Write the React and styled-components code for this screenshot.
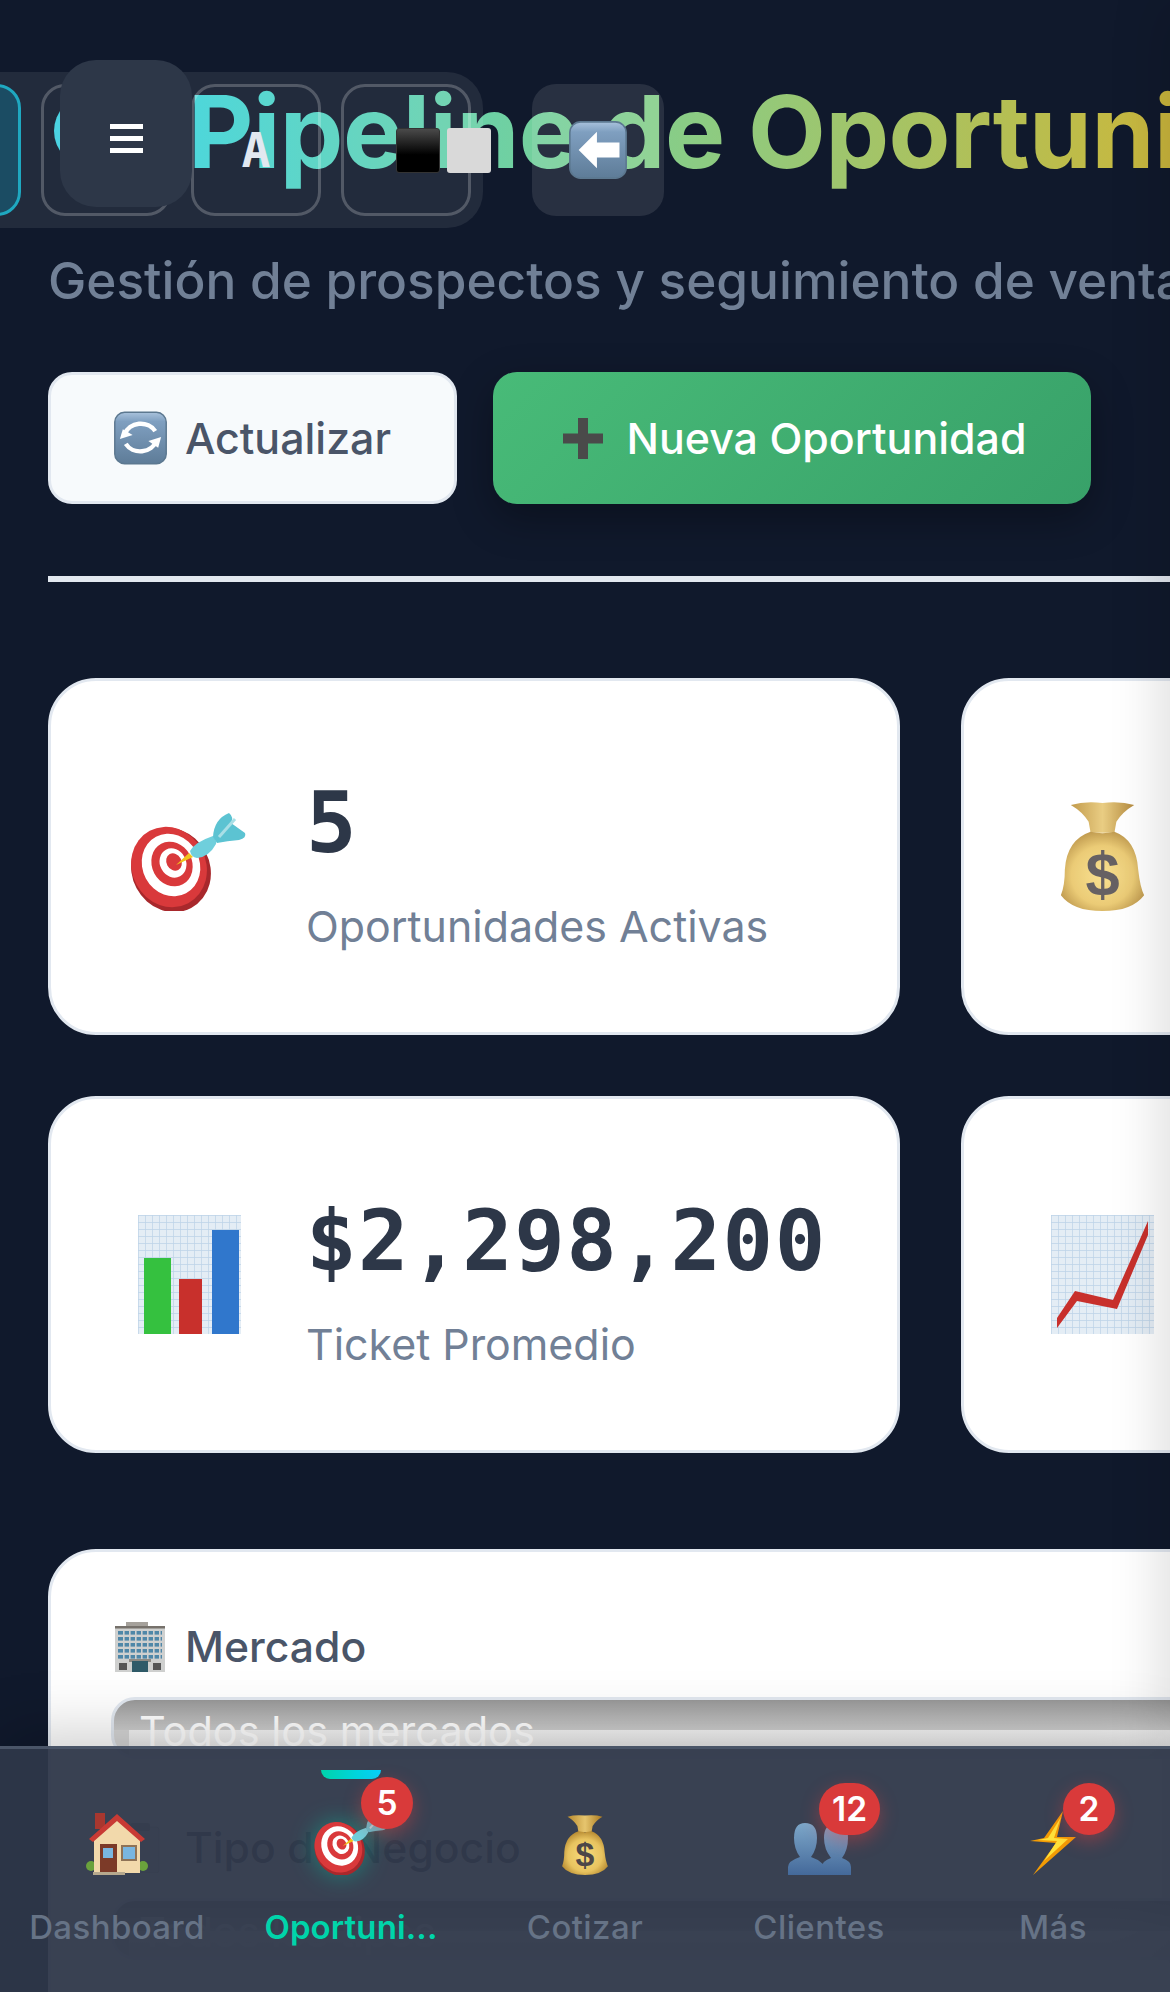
import React from "react";
import styled, { createGlobalStyle } from "styled-components";

const Global = createGlobalStyle`
  html, body { margin: 0; padding: 0; height: 1992px; overflow: hidden; background: #10192c; }
  #root { height: 1992px; overflow: hidden; position: relative; }
  * { box-sizing: border-box; }
`;
const sans = `Inter, "Noto Sans", "Liberation Sans", sans-serif`;
const mono = `"DejaVu Sans Mono", "Liberation Mono", monospace`;

const Page = styled.div`position: relative; width: 1170px; height: 1992px; overflow: hidden; background: #10192c; font-family: ${sans};`;
const Main = styled.main`width: 1860px; padding: 73px 48px 0;`;
const Header = styled.header`border-bottom: 6px solid #e2e8f0; padding-bottom: 72px; margin-bottom: 96px;`;
const Title = styled.h1`display: flex; align-items: center; margin: 0 0 59px; height: 116px; white-space: nowrap; font-size: 101px; font-weight: 700; line-height: 116px;`;
const TitleMark = styled.svg`flex: none; margin-right: 32px; display: block;`;
const TitleText = styled.span`
  background: linear-gradient(90deg, #3fd4d8 0%, #80cf90 33%, #bdbc4a 68%, #f5a512 100%);
  -webkit-background-clip: text; background-clip: text; color: transparent; letter-spacing: -0.5px;
`;
const Subtitle = styled.p`margin: 0 0 60px; font-size: 51.3px; line-height: 64px; font-weight: 550; color: #718096; white-space: nowrap;`;
const Actions = styled.div`display: flex; gap: 36px;`;
const ActionBtn = styled.button`
  display: flex; align-items: center; justify-content: center; gap: 18px; height: 132px; border-radius: 24px;
  font: 550 42.9px/50px ${sans}; padding: 0;
  width: ${p => p.$w}px;
  ${p => p.$primary ? `background: linear-gradient(135deg,#48bb78,#38a169); color:#fff; border: 0; box-shadow: 0 14px 42px rgba(0,0,0,.32); gap: 24px; padding-left: 5px;`
    : `background:#f7fafc; color:#4a5568; border: 3px solid #e2e8f0;`}
`;
const StatsGrid = styled.section`display: grid; grid-template-columns: 852px 852px; gap: 61px 61px; margin-bottom: 96px;`;
const StatCard = styled.article`
  display: flex; align-items: center; gap: 51px; height: 357px; padding: 0 72px; background: #fff;
  border: 3px solid #e2e8f0; border-radius: 48px;
`;
const StatIcon = styled.div`width: 132px; flex: none; display: flex; justify-content: center; opacity: ${p => p.$fade ? 0.85 : 1}; margin-top: ${p => p.$drop || 0}px;`;
const StatBody = styled.div`display: flex; flex-direction: column; gap: 28px; padding-top: 10px;`;
const StatValue = styled.div`font: 700 84px/100px ${mono}; color: #2d3748; white-space: nowrap; letter-spacing: 1.5px;`;
const StatLabel = styled.div`font: 400 42.9px/50px ${sans}; color: #718096; white-space: nowrap;`;
const FilterCard = styled.section`background: #fff; border: 3px solid #e2e8f0; border-radius: 48px; padding: 62px 64px 64px; height: 700px;`;
const FilterGroup = styled.div`margin-bottom: 56px;`;
const FilterLabel = styled.label`display: flex; align-items: center; gap: 20px; height: 66px; margin-bottom: 17px; font: 550 42.7px/50px ${sans}; color: #4a5568;`;
const SelectBox = styled.div`
  height: 62px; width: 1620px; margin-left: -4px; border: 3px solid #e2e8f0; border-radius: 24px; overflow: hidden; padding: 0 0 0 25px;
  font: 400 41.5px/62px ${sans}; color: #fff; white-space: nowrap;
  background:
    linear-gradient(#f4f4f4, #d4d4d4) 15px 30px / 100% 100% no-repeat,
    linear-gradient(#989898, #cecece) 0 0 / 100% 30px no-repeat,
    #d6d6d6;
`;

const Toolbar = styled.div`
  position: absolute; left: -121px; top: 72px; display: flex; gap: 20px; padding: 12px; height: 156px; z-index: 5;
  background: rgba(255,255,255,.08); border-radius: 36px;
`;
const ToolBtn = styled.div`
  width: 130px; height: 132px; border-radius: 24px; display: flex; align-items: center; justify-content: ${p => p.$start ? "flex-start" : "center"}; gap: 7px;
  padding-left: ${p => p.$start ? "52px" : "0"};
  color: #e2e8f0; font: 700 48px/1 ${mono};
  border: 3px solid ${p => p.$active ? "#1fa8c0" : "rgba(255,255,255,.22)"};
  background: ${p => p.$active ? "rgba(0,212,255,.2)" : "transparent"};
`;
const MenuBtn = styled.div`
  position: absolute; left: 60px; top: 60px; width: 132px; height: 147px; padding-top: 10px; border-radius: 36px; background: #2d3748; z-index: 6;
  display: flex; flex-direction: column; justify-content: center; align-items: center; gap: 7px;
`;
const MenuBar = styled.span`display: block; width: 33px; height: 5px; background: #fff;`;
const BackBtn = styled.div`
  position: absolute; left: 532px; top: 84px; width: 132px; height: 132px; border-radius: 24px; background: rgba(255,255,255,.1); z-index: 5;
  display: flex; align-items: center; justify-content: center;
`;
const EdgeShade = styled.div`position: absolute; left: 1170px; top: 0; bottom: 0; width: 40px; box-shadow: 0 0 60px rgba(0,0,0,.2); z-index: 3;`;

const Nav = styled.nav`
  position: absolute; left: 0; right: 0; bottom: 0; height: 246px; display: flex; z-index: 10;
  background: rgba(46,55,73,.95); border-top: 3px solid #4a5568; box-shadow: 0 -12px 60px rgba(0,0,0,.2);
`;
const NavItem = styled.div`position: relative; flex: 1; display: flex; flex-direction: column; align-items: center; padding-top: 64px;`;
const NavIcon = styled.div`height: 62px; display: flex; align-items: flex-end; justify-content: center; ${p => p.$glow && "filter: drop-shadow(0 0 12px rgba(0,212,170,.45));"}`;
const NavLabel = styled.div`margin-top: 32px; font: ${p => p.$active ? 600 : 500} 33px/40px ${sans}; letter-spacing: ${p => p.$active ? ".1px" : ".4px"}; color: ${p => p.$active ? "#00d4aa" : "#667386"}; white-space: nowrap;`;
const Indicator = styled.div`position: absolute; top: 21px; left: 87px; width: 60px; height: 9px; border-radius: 0 0 12px 12px; background: linear-gradient(90deg,#00d4aa,#00d4ff);`;
const Badge = styled.div`
  position: absolute; left: ${p => p.$left}px; top: ${p => p.$top}px; min-width: 52px; height: 52px; padding: 0 13px; border-radius: 26px;
  background: #d93a3a; color: #fff; font: 600 33.5px/52px ${sans}; text-align: center; box-shadow: 0 6px 18px rgba(229,62,62,.4);
`;

const Target = ({ w = 120, h = 100 }) => (
  <svg width={w} height={h} viewBox="0 0 120 100">
    <ellipse cx="42" cy="59" rx="39" ry="43" transform="rotate(-28 42 59)" fill="#a8282c" />
    <ellipse cx="40" cy="56" rx="37" ry="41" transform="rotate(-28 40 56)" fill="#d9393b" />
    <ellipse cx="42" cy="54" rx="28.5" ry="32" transform="rotate(-28 42 54)" fill="#fff" />
    <ellipse cx="43" cy="53" rx="20" ry="23" transform="rotate(-28 43 53)" fill="#d9393b" />
    <ellipse cx="44" cy="52" rx="13" ry="15" transform="rotate(-28 44 52)" fill="#fff" />
    <ellipse cx="45" cy="51" rx="7.5" ry="9" transform="rotate(-28 45 51)" fill="#d9393b" />
    <path d="M47 54 L60 42 L64 46 Z" fill="#f2c21a" />
    <path d="M61 40 Q66 31 84 25 Q88 30 87 33 Q80 46 68 47 Q62 46 61 40 Z" fill="#6fcfdc" />
    <path d="M84 26 Q85 8 100 2 Q105 6 102 12 L116 22 Q118 27 110 29 Q98 30 88 32 Z" fill="#5cc3d2" />
    <path d="M90 26 L106 8" stroke="#a9dfe6" strokeWidth="3" />
  </svg>
);
const MoneyBag = ({ w = 85, h = 109 }) => (
  <svg width={w} height={h} viewBox="0 0 84 110">
    <defs>
      <linearGradient id="bagN" x1="0" y1="0" x2="1" y2="0"><stop offset="0" stopColor="#b88a2e" /><stop offset=".5" stopColor="#e6c56e" /><stop offset="1" stopColor="#a9781f" /></linearGradient>
      <radialGradient id="bagB" cx=".5" cy=".55" r=".62"><stop offset="0" stopColor="#f8dc7e" /><stop offset=".6" stopColor="#e8c35f" /><stop offset="1" stopColor="#a87a25" /></radialGradient>
    </defs>
    <path d="M10 3 Q24 -1 42 1 Q60 -1 74 3 Q62 10 56 20 L54 31 H30 L28 20 Q22 10 10 3 Z" fill="url(#bagN)" />
    <path d="M30 30 Q42 33 54 30 Q76 38 78 68 Q80 86 84 94 Q72 110 42 110 Q12 110 0 94 Q4 84 4 68 Q6 38 30 30 Z" fill="url(#bagB)" />
    <text x="42" y="94" textAnchor="middle" fontFamily="Liberation Sans, sans-serif" fontWeight="700" fontSize="62" fill="#4c4648">$</text>
  </svg>
);
const Paper = ({ id }) => (
  <>
    <defs>
      <pattern id={id} width="7" height="7" patternUnits="userSpaceOnUse">
        <rect width="7" height="7" fill="#e4edf5" />
        <path d="M0 0H7M0 0V7" stroke="#bcd3e8" strokeWidth="1.4" />
      </pattern>
    </defs>
    <rect width="103" height="119" fill={`url(#${id})`} />
  </>
);
const BarChart = () => (
  <svg width="103" height="119" viewBox="0 0 103 119">
    <Paper id="p1" />
    <rect x="6" y="43" width="27" height="76" fill="#35c13f" />
    <rect x="41" y="64" width="23" height="55" fill="#c8302c" />
    <rect x="74" y="15" width="27" height="104" fill="#3077cc" />
  </svg>
);
const LineChart = () => (
  <svg width="103" height="119" viewBox="0 0 103 119">
    <Paper id="p2" />
    <path d="M6 103 L24 76 L62 85 L97 6 V20 L66 94 L26 86 L6 113 Z" fill="#c8302c" />
  </svg>
);
const House = () => (
  <svg width="62" height="62" viewBox="0 0 62 62">
    <circle cx="5" cy="53" r="5" fill="#6aa23c" /><circle cx="57" cy="53" r="5" fill="#6aa23c" />
    <rect x="9" y="0" width="10" height="16" fill="#a8372f" />
    <path d="M8 24 L31 4 L54 24 V60 H8 Z" fill="#f2d9ab" />
    <path d="M3 26 L31 1 L59 26 L55 29 L31 8 L7 29 Z" fill="#c83a34" />
    <rect x="14" y="31" width="17" height="29" fill="#7c3a28" /><rect x="17" y="35" width="10" height="10" fill="#79b6e0" />
    <rect x="35" y="32" width="16" height="16" fill="#8f7356" /><rect x="37" y="34" width="12" height="12" fill="#79b6e0" />
    <rect x="7" y="59" width="32" height="3" fill="#b7a98e" />
  </svg>
);
const Busts = () => (
  <svg width="63" height="52" viewBox="0 0 63 52">
    <defs><linearGradient id="bu" x1="0" y1="0" x2="0" y2="1"><stop offset="0" stopColor="#7da7c9" /><stop offset="1" stopColor="#44699a" /></linearGradient></defs>
    <path d="M34 52 V44 Q34 38 43 35 Q36 26 36 15 Q36 1 47 1 Q60 1 60 15 Q60 27 54 35 Q63 38 63 44 V52 Z" fill="url(#bu)" />
    <path d="M0 52 V44 Q0 38 12 34 Q6 26 6 15 Q6 0 17 0 Q29 0 29 15 Q29 26 23 34 Q36 38 42 52 Z" fill="url(#bu)" />
  </svg>
);
const Bolt = () => (
  <svg width="46" height="64" viewBox="0 0 46 64">
    <path d="M33 0 L14 27 L0 30 L26 32 L3 64 L46 26 L27 26 Z" fill="#f29b05" />
    <path d="M31 6 L18 27 L8 29 L27 30 L14 50 L38 28 L24 27 Z" fill="#ffe23a" />
  </svg>
);
const Building = () => (
  <svg width="50" height="50" viewBox="0 0 50 50">
    <rect x="11" y="0" width="22" height="5" fill="#a5a19b" />
    <rect x="0" y="4" width="50" height="46" fill="#cfd0cf" />
    <rect x="0" y="4" width="50" height="2.5" fill="#76716b" />
    {[9, 15, 21, 27, 33].map(y => <rect key={y} x="3" y={y} width="44" height="3.6" fill="#4f87a8" />)}
    {[8, 14, 20, 26, 32, 38, 44].map(x => <rect key={x} x={x} y="8" width="1.6" height="30" fill="#cfd0cf" />)}
    <rect x="14" y="37" width="22" height="3" fill="#8e8a84" />
    <rect x="17" y="39" width="16" height="11" fill="#2f5a68" />
    <rect x="4" y="41" width="8" height="7" fill="#555" /><rect x="38" y="41" width="8" height="7" fill="#555" />
  </svg>
);
const KeyCap = ({ w, h, id, children }) => (
  <svg width={w} height={h} viewBox="0 0 54 54">
    <defs><linearGradient id={id} x1="0" y1="0" x2="0" y2="1"><stop offset="0" stopColor="#a9c2dc" /><stop offset=".18" stopColor="#7f9fc0" /><stop offset="1" stopColor="#5e7c98" /></linearGradient></defs>
    <rect x="0.8" y="0.8" width="52.4" height="52.4" rx="10" fill={`url(#${id})`} stroke="#5c7890" strokeWidth="1.5" />
    {children}
  </svg>
);
const Refresh = () => (
  <KeyCap w={53} h={54} id="k1">
    <path d="M11 23 A17 15 0 0 1 42 20" fill="none" stroke="#fff" strokeWidth="4.5" />
    <path d="M6 28 L9 18 L19 24 Z" fill="#fff" />
    <path d="M43 30 A17 15 0 0 1 12 33" fill="none" stroke="#fff" strokeWidth="4.5" />
    <path d="M48 26 L45 37 L35 30 Z" fill="#fff" />
  </KeyCap>
);
const BackArrow = () => (
  <KeyCap w={58} h={60} id="k2">
    <path d="M9 27 L26 10 V20 H47 V34 H26 V44 Z" fill="#fff" />
  </KeyCap>
);
const Square = styled.span`display: block; width: 44px; height: 45px; border-radius: 3px; flex: none;
  background: ${p => p.$dark ? "linear-gradient(#4a4a4a,#000 60%)" : "#d9d9d9"}; ${p => p.$dark && "border: 1px solid #333;"}`;
const Plus = () => (
  <svg width="40" height="41" viewBox="0 0 40 41"><path d="M15 0H25V15.5H40V25.5H25V41H15V25.5H0V15.5H15Z" fill="#4a4a4a" /></svg>
);
const Clipboard = () => (
  <svg width="50" height="50" viewBox="0 0 50 50"><rect x="6" y="4" width="38" height="46" rx="3" fill="#e8e8e8" stroke="#bbb" /><rect x="15" y="0" width="20" height="8" rx="2" fill="#aaa" /></svg>
);

const navItems = [
  { label: "Dashboard", icon: <House /> },
  { label: "Oportuni...", icon: <Target w={76} h={63} />, active: true, badge: "5", left: 127, top: 28 },
  { label: "Cotizar", icon: <MoneyBag w={46} h={60} /> },
  { label: "Clientes", icon: <Busts />, badge: "12", left: 117, top: 34 },
  { label: "Más", icon: <Bolt />, badge: "2", left: 127, top: 34 },
];

export default function App() {
  return (
    <Page>
      <Global />
      <Main>
        <Header>
          <Title>
            <TitleMark width="108" height="96" viewBox="0 0 108 96"><circle cx="42" cy="48" r="36" fill="#3ccfe0" /></TitleMark>
            <TitleText>Pipeline de Oportunidades</TitleText>
          </Title>
          <Subtitle>Gestión de prospectos y seguimiento de ventas</Subtitle>
          <Actions>
            <ActionBtn $w={409}><Refresh />Actualizar</ActionBtn>
            <ActionBtn $primary $w={598}><Plus />Nueva Oportunidad</ActionBtn>
          </Actions>
        </Header>
        <StatsGrid>
          <StatCard><StatIcon $drop={8}><Target /></StatIcon><StatBody><StatValue>5</StatValue><StatLabel>Oportunidades Activas</StatLabel></StatBody></StatCard>
          <StatCard><StatIcon $fade><MoneyBag /></StatIcon><StatBody><StatValue>$11,491,000</StatValue><StatLabel>Valor Total</StatLabel></StatBody></StatCard>
          <StatCard><StatIcon><BarChart /></StatIcon><StatBody><StatValue>$2,298,200</StatValue><StatLabel>Ticket Promedio</StatLabel></StatBody></StatCard>
          <StatCard><StatIcon><LineChart /></StatIcon><StatBody><StatValue>0%</StatValue><StatLabel>Tasa de Cierre</StatLabel></StatBody></StatCard>
        </StatsGrid>
        <FilterCard>
          <FilterGroup>
            <FilterLabel><Building />Mercado</FilterLabel>
            <SelectBox>Todos los mercados</SelectBox>
          </FilterGroup>
          <FilterGroup>
            <FilterLabel><Clipboard />Tipo de Negocio</FilterLabel>
            <SelectBox>Todos los tipos</SelectBox>
          </FilterGroup>
        </FilterCard>
      </Main>
      <EdgeShade />
      <Toolbar>
        <ToolBtn $active />
        <ToolBtn />
        <ToolBtn>A</ToolBtn>
        <ToolBtn $start><Square $dark /><Square /></ToolBtn>
      </Toolbar>
      <MenuBtn><MenuBar /><MenuBar /><MenuBar /></MenuBtn>
      <BackBtn><BackArrow /></BackBtn>
      <Nav>
        {navItems.map(it => (
          <NavItem key={it.label}>
            {it.active && <Indicator />}
            <NavIcon $glow={it.active}>{it.icon}</NavIcon>
            <NavLabel $active={it.active}>{it.label}</NavLabel>
            {it.badge && <Badge $left={it.left} $top={it.top}>{it.badge}</Badge>}
          </NavItem>
        ))}
      </Nav>
    </Page>
  );
}
